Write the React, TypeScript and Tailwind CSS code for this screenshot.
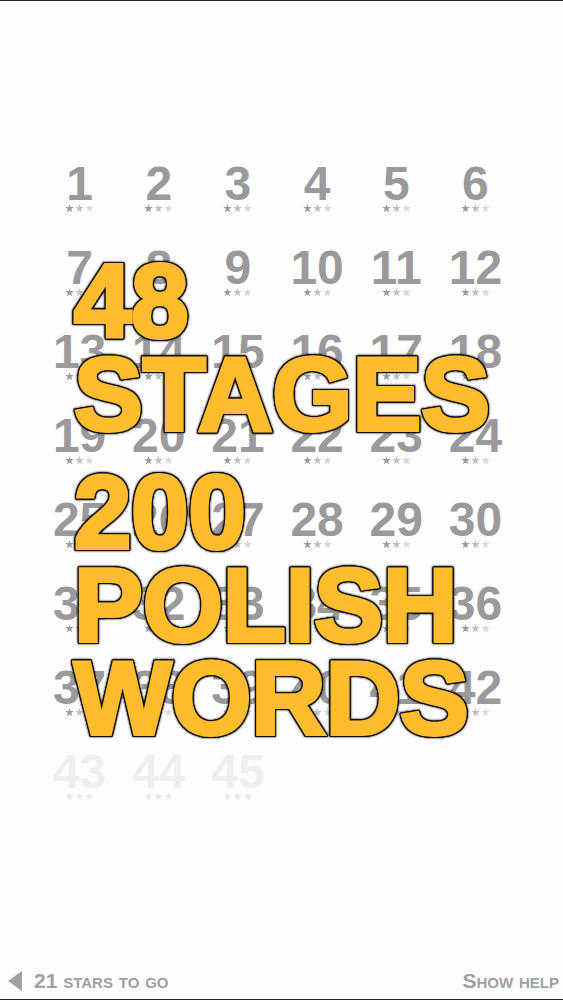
const stages = Array.from({ length: 45 }, (_, i) => i + 1);

const starColors = ["text-[#9b9a9d]", "text-[#c0c0c2]", "text-[#d9d9db]"];

function Star({ className }: { className: string }) {
  return (
    <svg viewBox="0 0 20 20" fill="currentColor" className={className}>
      <path d="M10 0l2.2 6.9 7.3-.1-5.8 4.3 2.2 7.4-5.9-4.3-5.9 4.3 2.2-7.4L.5 6.8l7.3.1z" />
    </svg>
  );
}

function Stage({ number }: { number: number }) {
  const locked = number > 42;

  return (
    <button
      type="button"
      disabled={locked}
      className="flex h-[84px] flex-col items-center"
    >
      <span
        className={
          locked
            ? "text-5xl leading-[48px] font-bold text-[#efeef0]"
            : "text-5xl leading-[48px] font-bold text-[#9a999b]"
        }
      >
        {number}
      </span>
      <span className="-mt-1 flex gap-px">
        {starColors.map((color) => (
          <Star
            key={color}
            className={locked ? "size-[9px] text-[#e9e8ea]" : `size-[9px] ${color}`}
          />
        ))}
      </span>
    </button>
  );
}

export default function App() {
  return (
    <div className="relative flex min-h-screen flex-col border-y border-[#2b282c] bg-[#fefefe] font-['Liberation_Sans',Arial,sans-serif]">
      <main className="grid grid-cols-6 pt-[159px] pr-12 pl-10">
        {stages.map((number) => (
          <Stage key={number} number={number} />
        ))}
      </main>

      <footer className="mt-auto flex items-center justify-between pr-1 pb-1 pl-2 text-[21px] leading-7 font-bold text-[#a09fa2] [font-variant-caps:small-caps]">
        <a href="#back" className="flex items-center gap-3">
          <svg viewBox="0 0 14 20" fill="currentColor" className="h-5 w-[14px]">
            <path d="M14 0v20L0 10z" />
          </svg>
          21 stars to go
        </a>
        <button type="button" className="[font-variant-caps:small-caps]">
          Show help
        </button>
      </footer>

      <div className="pointer-events-none absolute top-[254px] left-[74px] flex flex-col gap-[25px] text-[103px] leading-[93px] font-bold text-[#ffbd2e] [-webkit-text-stroke:4px_#ffbd2e] [stroke-linejoin:round] [filter:drop-shadow(1px_0_#111)_drop-shadow(-1px_0_#111)_drop-shadow(0_1px_#111)_drop-shadow(0_-1px_#111)_drop-shadow(0_0_1px_#111)]">
        <h1>
          48
          <br />
          STAGES
        </h1>
        <h2>
          200
          <br />
          POLISH
          <br />
          WORDS
        </h2>
      </div>
    </div>
  );
}
